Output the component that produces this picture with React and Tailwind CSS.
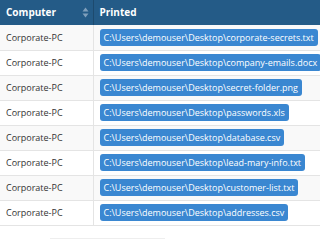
import React from 'react';

const rows = [
    'corporate-secrets.txt',
    'company-emails.docx',
    'secret-folder.png',
    'passwords.xls',
    'database.csv',
    'lead-mary-info.txt',
    'customer-list.txt',
    'addresses.csv',
];

const SortIcon = () => (
    <svg width="7" height="11" viewBox="0 0 7 11" className="text-[#7f9fbb]">
        <path d="M3.5 0.5 L6.5 4.5 H0.5 Z" fill="currentColor" />
        <path d="M3.5 10.5 L6.5 6.5 H0.5 Z" fill="currentColor" />
    </svg>
);

export default function App() {
    return (
        <div className="w-[320px] h-[240px] bg-white overflow-hidden" style={{ fontFamily: '"Open Sans", sans-serif' }}>
            <table className="w-full table-fixed border-collapse text-[9px]">
                <thead>
                    <tr className="bg-[#245b87] text-white h-[25px]">
                        <th className="w-[93px] pl-[6px] pr-[4px] text-left font-bold text-[10px] border-r border-[#1d4a6e]">
                            <div className="flex items-center justify-between">
                                <span>Computer</span>
                                <SortIcon />
                            </div>
                        </th>
                        <th className="px-[6px] text-left font-bold text-[10px]">Printed</th>
                    </tr>
                </thead>
                <tbody>
                    {rows.map((file, i) => (
                        <tr key={file} className={`h-[25px] border-b border-[#e4e4e4] ${i % 2 === 0 ? 'bg-[#f9f9f9]' : 'bg-white'}`}>
                            <td className="pl-[6px] text-[#333] whitespace-nowrap border-r border-[#e4e4e4]">Corporate-PC</td>
                            <td className="px-[6px] whitespace-nowrap">
                                <span className="inline-block bg-[#3a87d1] text-white rounded-[3px] px-[4px] leading-[17px]">
                                    C:\Users\demouser\Desktop\{file}
                                </span>
                            </td>
                        </tr>
                    ))}
                </tbody>
            </table>
            <div className="mt-[12px] ml-[50px] w-[115px] border-t border-[#eee]" />
        </div>
    );
}
